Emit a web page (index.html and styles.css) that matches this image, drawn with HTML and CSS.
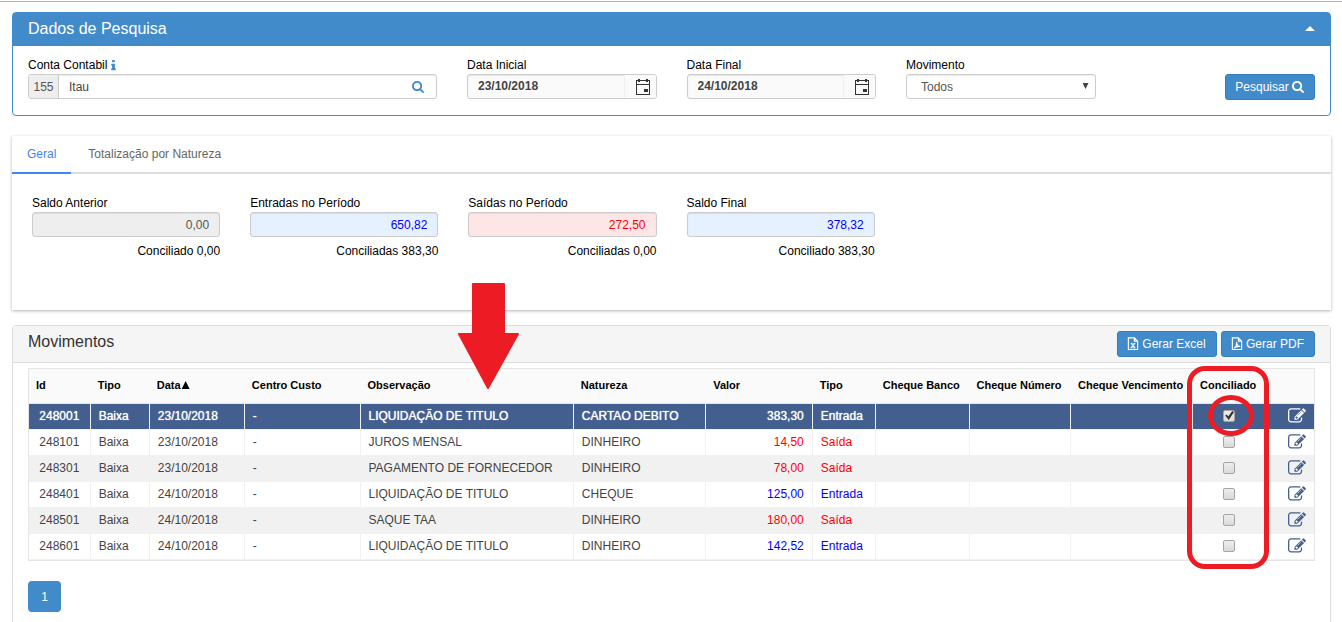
FILE: index.html
```
<!DOCTYPE html>
<html lang="pt-BR">
<head>
    <meta charset="UTF-8">
    <meta name="viewport" content="width=device-width, initial-scale=1.0">
    <title>Movimentos</title>
    <link rel="stylesheet" href="styles.css">
</head>
<body>

<svg class="sprite" aria-hidden="true">
    <symbol id="search" viewBox="0 0 1664 1792"><path d="M1152 832q0-185-131.500-316.500t-316.500-131.500-316.500 131.500-131.500 316.500 131.500 316.500 316.500 131.500 316.500-131.500 131.500-316.500zm512 832q0 52-38 90t-90 38q-54 0-90-38l-343-342q-179 124-399 124-143 0-273.500-55.500t-225-150-150-225-55.500-273.500 55.500-273.500 150-225 225-150 273.500-55.500 273.500 55.500 225 150 150 225 55.500 273.500q0 220-124 399l343 343q37 37 37 90z"/></symbol>
    <symbol id="info" viewBox="576 0 640 1792"><path d="M1216 1344v128q0 26-19 45t-45 19h-512q-26 0-45-19t-19-45v-128q0-26 19-45t45-19h64v-384h-64q-26 0-45-19t-19-45v-128q0-26 19-45t45-19h384q26 0 45 19t19 45v576h64q26 0 45 19t19 45zm-128-1152v192q0 26-19 45t-45 19h-256q-26 0-45-19t-19-45v-192q0-26 19-45t45-19h256q26 0 45 19t19 45z"/></symbol>
    <symbol id="edit" viewBox="0 0 1792 1792"><path d="M888 1184l116-116-152-152-116 116v56h96v96h56zm440-720q-16-16-33 1l-350 350q-17 17-1 33t33-1l350-350q17-17 1-33zm80 594v190q0 119-84.500 203.500t-203.500 84.500h-832q-119 0-203.500-84.500t-84.500-203.500v-832q0-119 84.500-203.500t203.500-84.500h832q63 0 117 25 15 7 18 23 3 17-9 29l-49 49q-14 14-32 8-23-6-45-6h-832q-66 0-113 47t-47 113v832q0 66 47 113t113 47h832q66 0 113-47t47-113v-126q0-13 9-22l64-64q15-15 35-7t20 29zm-96-738l288 288-672 672h-288v-288zm444 132l-92 92-288-288 92-92q28-28 68-28t68 28l152 152q28 28 28 68t-28 68z"/></symbol>
    <symbol id="calendar" viewBox="0 0 16 16"><path d="M1 1h14v15H1zM2 2v3h12V2zM2 6v9h12V6z" fill-rule="evenodd"/><path d="M3 0h2v3H3zM11 0h2v3h-2zM9 10h4v3H9z"/></symbol>
    <symbol id="excel" viewBox="0 0 12 14"><path d="M1 1h6.500l3.500 3.500v9H1zM7.500 1v3.500H11M4.200 7l3.600 4.500M7.800 7l-3.600 4.500M3.500 7h2M6.500 7h2M3.500 11.500h2M6.500 11.500h2" fill="none" stroke="currentColor" stroke-width="1.200"/></symbol>
    <symbol id="pdf" viewBox="0 0 12 14"><path d="M1 1h6.500l3.500 3.500v9H1zM7.500 1v3.500H11M3 12c2-1.500 3-4 2.600-6.500 0 2.500 1.400 4.500 3.900 4.700-2.500-.4-4.500 0-6.500 1.800z" fill="none" stroke="currentColor" stroke-width="1.200"/></symbol>
</svg>

<main class="page">
    <form class="panel panel-primary">
        <div class="panel-heading">
            <h1>Dados de Pesquisa</h1>
            <button type="button" class="collapse" aria-label="Recolher"></button>
        </div>
        <div class="search-row">
            <div class="col">
                <label for="conta">Conta Contabil <svg class="icon-info"><use href="#info"/></svg></label>
                <div class="control">
                    <span class="addon">155</span>
                    <input type="text" id="conta" value="Itau">
                    <button type="button" class="icon-btn" aria-label="Buscar conta"><svg class="icon"><use href="#search"/></svg></button>
                </div>
            </div>
            <div class="col">
                <label for="data_inicial">Data Inicial</label>
                <div class="control date">
                    <input type="text" id="data_inicial" value="23/10/2018">
                    <button type="button" class="icon-btn" aria-label="Abrir calendário"><svg class="icon-calendar"><use href="#calendar"/></svg></button>
                </div>
            </div>
            <div class="col">
                <label for="data_final">Data Final</label>
                <div class="control date">
                    <input type="text" id="data_final" value="24/10/2018">
                    <button type="button" class="icon-btn" aria-label="Abrir calendário"><svg class="icon-calendar"><use href="#calendar"/></svg></button>
                </div>
            </div>
            <div class="col">
                <label for="movimento">Movimento</label>
                <div class="control select">
                    <select id="movimento">
                        <option>Todos</option>
                        <option>Entrada</option>
                        <option>Saída</option>
                    </select>
                </div>
            </div>
            <div class="col col-action">
                <button type="button" class="btn">Pesquisar <svg class="icon"><use href="#search"/></svg></button>
            </div>
        </div>
    </form>

    <section class="summary">
        <nav class="tabs">
            <a href="#geral" class="tab active">Geral</a>
            <a href="#natureza" class="tab">Totalização por Natureza</a>
        </nav>
        <div class="totals">
            <div class="col">
                <label for="saldo_anterior">Saldo Anterior</label>
                <input type="text" id="saldo_anterior" class="total" value="0,00" readonly>
                <p>Conciliado 0,00</p>
            </div>
            <div class="col">
                <label for="entradas">Entradas no Período</label>
                <input type="text" id="entradas" class="total total-in" value="650,82" readonly>
                <p>Conciliadas 383,30</p>
            </div>
            <div class="col">
                <label for="saidas">Saídas no Período</label>
                <input type="text" id="saidas" class="total total-out" value="272,50" readonly>
                <p>Conciliadas 0,00</p>
            </div>
            <div class="col">
                <label for="saldo_final">Saldo Final</label>
                <input type="text" id="saldo_final" class="total total-in" value="378,32" readonly>
                <p>Conciliado 383,30</p>
            </div>
        </div>
    </section>

    <section class="panel panel-list">
        <div class="panel-heading">
            <h2>Movimentos</h2>
            <div class="actions">
                <button type="button" class="btn"><svg class="icon-file"><use href="#excel"/></svg> Gerar Excel</button>
                <button type="button" class="btn"><svg class="icon-file"><use href="#pdf"/></svg> Gerar PDF</button>
            </div>
        </div>
        <div class="table-wrap">
            <table>
                <colgroup>
                    <col class="c-id"><col class="c-tipo"><col class="c-data"><col class="c-centro"><col class="c-obs">
                    <col class="c-natureza"><col class="c-valor"><col class="c-mov"><col class="c-banco">
                    <col class="c-numero"><col class="c-venc"><col class="c-conc"><col class="c-edit">
                </colgroup>
                <thead>
                    <tr>
                        <th>Id</th>
                        <th>Tipo</th>
                        <th>Data<span class="sort"></span></th>
                        <th>Centro Custo</th>
                        <th>Observação</th>
                        <th>Natureza</th>
                        <th>Valor</th>
                        <th>Tipo</th>
                        <th>Cheque Banco</th>
                        <th>Cheque Número</th>
                        <th>Cheque Vencimento</th>
                        <th>Conciliado</th>
                        <th></th>
                    </tr>
                </thead>
                <tbody>
                    <tr class="selected">
                        <td class="id">248001</td><td>Baixa</td><td>23/10/2018</td><td>-</td>
                        <td>LIQUIDAÇÃO DE TITULO</td><td>CARTAO DEBITO</td>
                        <td class="valor in">383,30</td><td class="in">Entrada</td><td></td><td></td><td></td>
                        <td class="check"><input type="checkbox" aria-label="Conciliado 248001" checked></td>
                        <td class="edit"><button type="button" aria-label="Editar 248001"><svg class="icon-edit"><use href="#edit"/></svg></button></td>
                    </tr>
                    <tr>
                        <td class="id">248101</td><td>Baixa</td><td>23/10/2018</td><td>-</td>
                        <td>JUROS MENSAL</td><td>DINHEIRO</td>
                        <td class="valor out">14,50</td><td class="out">Saída</td><td></td><td></td><td></td>
                        <td class="check"><input type="checkbox" aria-label="Conciliado 248101"></td>
                        <td class="edit"><button type="button" aria-label="Editar 248101"><svg class="icon-edit"><use href="#edit"/></svg></button></td>
                    </tr>
                    <tr>
                        <td class="id">248301</td><td>Baixa</td><td>23/10/2018</td><td>-</td>
                        <td>PAGAMENTO DE FORNECEDOR</td><td>DINHEIRO</td>
                        <td class="valor out">78,00</td><td class="out">Saída</td><td></td><td></td><td></td>
                        <td class="check"><input type="checkbox" aria-label="Conciliado 248301"></td>
                        <td class="edit"><button type="button" aria-label="Editar 248301"><svg class="icon-edit"><use href="#edit"/></svg></button></td>
                    </tr>
                    <tr>
                        <td class="id">248401</td><td>Baixa</td><td>24/10/2018</td><td>-</td>
                        <td>LIQUIDAÇÃO DE TITULO</td><td>CHEQUE</td>
                        <td class="valor in">125,00</td><td class="in">Entrada</td><td></td><td></td><td></td>
                        <td class="check"><input type="checkbox" aria-label="Conciliado 248401"></td>
                        <td class="edit"><button type="button" aria-label="Editar 248401"><svg class="icon-edit"><use href="#edit"/></svg></button></td>
                    </tr>
                    <tr>
                        <td class="id">248501</td><td>Baixa</td><td>24/10/2018</td><td>-</td>
                        <td>SAQUE TAA</td><td>DINHEIRO</td>
                        <td class="valor out">180,00</td><td class="out">Saída</td><td></td><td></td><td></td>
                        <td class="check"><input type="checkbox" aria-label="Conciliado 248501"></td>
                        <td class="edit"><button type="button" aria-label="Editar 248501"><svg class="icon-edit"><use href="#edit"/></svg></button></td>
                    </tr>
                    <tr>
                        <td class="id">248601</td><td>Baixa</td><td>24/10/2018</td><td>-</td>
                        <td>LIQUIDAÇÃO DE TITULO</td><td>DINHEIRO</td>
                        <td class="valor in">142,52</td><td class="in">Entrada</td><td></td><td></td><td></td>
                        <td class="check"><input type="checkbox" aria-label="Conciliado 248601"></td>
                        <td class="edit"><button type="button" aria-label="Editar 248601"><svg class="icon-edit"><use href="#edit"/></svg></button></td>
                    </tr>
                </tbody>
            </table>
            <svg class="mark-arrow" viewBox="0 0 62 108" aria-hidden="true"><path d="M15 1h31v50h14L30 105 1 51h14z" fill="#ed1c24" stroke="#ed1c24" stroke-width="2" stroke-linejoin="round"/></svg>
            <div class="mark-column"></div>
            <div class="mark-check"></div>
        </div>
        <button type="button" class="page-btn">1</button>
    </section>
</main>

</body>
</html>
```
FILE: styles.css
```
* {
    box-sizing: border-box;
}
body {
    font-family: "Liberation Sans", Arial, sans-serif;
    font-size: 12px;
    line-height: 16px;
    margin: 0;
    color: #000;
    background-color: #fff;
}
h1, h2, p {
    margin: 0;
}
h1, h2 {
    font-size: 16px;
    font-weight: normal;
}
button, input, select {
    font-family: inherit;
    font-size: 12px;
}
svg {
    fill: currentColor;
}
.sprite {
    display: none;
}
.page {
    display: flex;
    flex-direction: column;
    min-height: 100vh;
    padding: 10px 11px 0 12px;
    border-top: 1px solid #fff;
    box-shadow: inset 0 1px 0 #b0b0b0;
}

/* panels */
.panel {
    border: 1px solid #ddd;
    border-radius: 4px;
}
.panel-heading {
    display: flex;
    justify-content: space-between;
    padding: 0 15px;
}
.panel-primary {
    margin-top: 1px;
    border-color: #428bca;
}
.panel-primary .panel-heading {
    align-items: center;
    height: 33px;
    padding-bottom: 2px;
    color: #fff;
    background-color: #428bca;
}
.collapse {
    width: 10px;
    height: 5px;
    padding: 0;
    border: none;
    background: #fff;
    clip-path: polygon(50% 0, 100% 100%, 0 100%);
}
.search-row {
    display: grid;
    grid-template-columns: 4fr 2fr 2fr 2fr 2fr;
    padding: 10px 0 15px;
}
.col {
    padding: 0 15px;
    min-width: 0;
}
.col label {
    display: block;
    height: 18px;
    line-height: 18px;
}
.col-action {
    display: flex;
    justify-content: flex-end;
    padding-top: 18px;
}

/* fields */
.control {
    display: flex;
    height: 25px;
    border: 1px solid #ccc;
    border-radius: 3px;
    overflow: hidden;
    background-color: #fff;
    box-shadow: inset 0 1px 1px rgba(0, 0, 0, 0.08);
}
.control input {
    flex: 1;
    min-width: 0;
    padding: 0 10px;
    border: none;
    color: #444;
    background: transparent;
}
.addon {
    width: 30px;
    line-height: 24px;
    text-align: center;
    color: #555;
    background-color: #eee;
    border-right: 1px solid #ccc;
}
.icon-btn {
    padding: 0 12px;
    border: none;
    color: #428bca;
    background: transparent;
}
.date, .date .icon-btn {
    background-color: #fafafa;
}
.control.date input {
    padding-bottom: 2px;
    font-weight: bold;
    border-right: 1px solid #f0f0f0;
}
.date .icon-btn {
    padding: 1px 5px 0 10px;
    color: #333;
}
.select {
    position: relative;
}
.select select {
    flex: 1;
    appearance: none;
    padding: 0 14px;
    border: none;
    color: #555;
    background: transparent;
}
.select::after {
    content: "";
    position: absolute;
    top: 8px;
    right: 6px;
    width: 6px;
    height: 6px;
    background: #444;
    clip-path: polygon(0 0, 100% 0, 50% 100%);
}
.icon, .icon-file {
    width: 12px;
    height: 13px;
    vertical-align: -2px;
}
.icon-info {
    width: 5px;
    height: 13px;
    vertical-align: -3px;
    color: #428bca;
}
.icon-calendar {
    display: block;
    width: 16px;
    height: 16px;
}
.btn {
    height: 26px;
    padding: 0 10px 0 9px;
    border: 1px solid #357ebd;
    border-radius: 3px;
    color: #fff;
    background-color: #428bca;
    cursor: pointer;
}
.btn:hover {
    background-color: #3276b1;
}

/* summary */
.summary {
    height: 174px;
    margin-top: 20px;
    box-shadow: 0 1px 3px rgba(0, 0, 0, 0.3);
}
.tabs {
    display: flex;
    border-bottom: 2px solid #ddd;
}
.tab {
    height: 38px;
    margin-bottom: -2px;
    padding: 0 15px;
    line-height: 36px;
    color: #666;
    text-decoration: none;
}
.tab + .tab {
    margin-left: 2px;
}
.tab.active {
    color: #4285f4;
    border-bottom: 2px solid #4285f4;
}
.totals {
    display: grid;
    grid-template-columns: repeat(6, 1fr);
    padding: 20px 5px;
}
.total {
    display: block;
    width: 100%;
    height: 25px;
    padding: 0 10px;
    text-align: right;
    color: #555;
    border: 1px solid #ccc;
    border-radius: 3px;
    background-color: #eee;
    box-shadow: inset 0 1px 1px rgba(0, 0, 0, 0.08);
}
.total-in {
    color: #00f;
    background-color: #e6f1ff;
}
.total-out {
    color: #f00;
    background-color: #ffe6e6;
}
.totals p {
    margin-top: 6px;
    text-align: right;
}

/* movements */
.panel-list {
    flex: 1;
    margin-top: 15px;
    border-bottom: none;
    border-radius: 4px 4px 0 0;
}
.panel-list .panel-heading {
    padding-top: 5px;
    height: 37px;
    color: #333;
    background-color: #f5f5f5;
    border-bottom: 1px solid #ddd;
}
.panel-list h2 {
    line-height: 22px;
}
.actions {
    display: flex;
    gap: 4px;
}
.table-wrap {
    position: relative;
    margin: 5px 15px 20px;
    border: 1px solid #e5e5e5;
}
table {
    width: 100%;
    table-layout: fixed;
    border-collapse: separate;
    border-spacing: 0;
}
.c-id { width: 4.8%; }
.c-tipo { width: 4.6%; }
.c-data { width: 7.4%; }
.c-centro { width: 9%; }
.c-obs { width: 16.6%; }
.c-natureza { width: 10.3%; }
.c-valor { width: 8.3%; }
.c-mov { width: 4.9%; }
.c-banco { width: 7.3%; }
.c-numero { width: 7.9%; }
.c-venc { width: 9.5%; }
.c-conc { width: 5.7%; }
.c-edit { width: 3.7%; }
th {
    height: 35px;
    padding: 0 0 2px 7px;
    font-size: 11px;
    text-align: left;
    white-space: nowrap;
    background-color: #fafafa;
    border-bottom: 1px solid #e5e5e5;
}
.sort {
    display: inline-block;
    width: 8px;
    height: 8px;
    margin-left: 1px;
    background: #000;
    clip-path: polygon(50% 0, 100% 100%, 0 100%);
}
td {
    height: 26px;
    padding: 0 8px 2px;
    color: #444;
    white-space: nowrap;
    border-right: 1px solid #f1f1f1;
    border-bottom: 1px solid #f1f1f1;
}
td:last-child {
    border-right: none;
}
tbody tr:nth-child(odd) td {
    background-color: #f1f1f1;
}
td.in {
    color: #00f;
}
td.out {
    color: #f00;
}
tbody tr.selected td {
    color: #fff;
    background-color: #425f8f;
    text-shadow: 0 0 1px #fff;
}
.id, .check, .edit {
    text-align: center;
}
.valor {
    text-align: right;
}
.check input {
    appearance: none;
    display: block;
    width: 12px;
    height: 12px;
    margin: 0 auto;
    border: 1px solid #a5a5a5;
    border-radius: 2px;
    background: linear-gradient(#eee, #d9d9d9);
}
.check input:checked::before {
    content: "";
    display: block;
    width: 10px;
    height: 10px;
    background: #333;
    clip-path: polygon(10% 50%, 25% 40%, 40% 60%, 80% 5%, 98% 15%, 45% 95%);
}
.edit button {
    display: block;
    margin: 0 0 0 auto;
    padding: 0;
    border: none;
    color: #425f8f;
    background: transparent;
}
.selected .edit button {
    color: #fff;
}
.icon-edit {
    display: block;
    width: 18px;
    height: 18px;
}

/* highlights over the table */
.mark-arrow {
    position: absolute;
    top: -86px;
    left: 33.4%;
    width: 62px;
    height: 108px;
}
.mark-column {
    position: absolute;
    top: -3px;
    right: 3.5%;
    bottom: -9px;
    width: 82px;
    border: 5px solid #ed1c24;
    border-radius: 18px;
}
.mark-check {
    position: absolute;
    top: 26px;
    right: 4.7%;
    width: 46px;
    height: 41px;
    border: 5px solid #ed1c24;
    border-radius: 50%;
}
.page-btn {
    width: 33px;
    height: 31px;
    margin-left: 15px;
    border: none;
    border-radius: 4px;
    color: #fff;
    background-color: #428bca;
}
```
